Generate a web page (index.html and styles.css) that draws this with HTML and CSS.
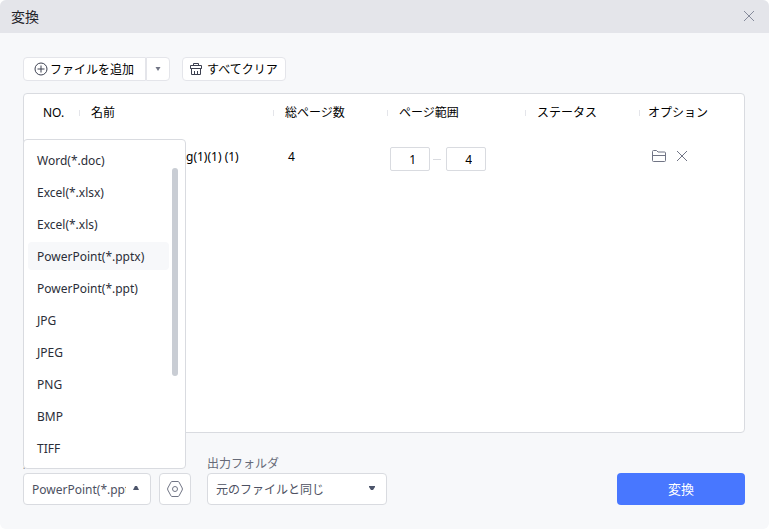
FILE: index.html
```html
<!DOCTYPE html>
<html lang="ja">
<head>
<meta charset="utf-8">
<meta name="viewport" content="width=device-width, initial-scale=1">
<title>変換</title>
<link rel="stylesheet" href="styles.css">
</head>
<body>
<div class="window">
  <header class="titlebar">
    <h1 class="title">変換</h1>
    <button class="icon-button close" type="button" aria-label="閉じる">
      <svg width="12" height="12" viewBox="0 0 12 12"><path d="M1 1l10 10M11 1L1 11"/></svg>
    </button>
  </header>
  <main class="content">
    <div class="toolbar">
      <div class="split">
        <button class="tool add" type="button">
          <svg width="14" height="14" viewBox="0 0 14 14"><circle cx="7" cy="7" r="6"/><path d="M7 3.5v7M3.5 7h7"/></svg>
          <span>ファイルを追加</span>
        </button>
        <button class="tool more" type="button" aria-label="その他の追加方法">
          <svg class="caret" width="6" height="4" viewBox="0 0 6 4"><path d="M.5 0h5L3 4z"/></svg>
        </button>
      </div>
      <button class="tool clear" type="button">
        <svg width="14" height="14" viewBox="0 0 14 14"><path d="M4.5 3.500V1.500h5v2M2.500 6.500h-1v-3h11v3h-1M1.500 6.500h11M2.500 6.500v6h9v-6M5.500 9v3.500M8.500 9v3.500"/></svg>
        <span>すべてクリア</span>
      </button>
    </div>
    <section class="panel">
      <table class="files">
        <thead>
          <tr>
            <th class="col-no" scope="col">NO.</th>
            <th scope="col">名前</th>
            <th class="col-total" scope="col">総ページ数</th>
            <th class="col-range" scope="col">ページ範囲</th>
            <th class="col-status" scope="col">ステータス</th>
            <th class="col-option" scope="col">オプション</th>
          </tr>
        </thead>
        <tbody>
          <tr>
            <td></td>
            <td class="file-name">g(1)(1) (1)</td>
            <td class="total">4</td>
            <td class="range-cell">
              <div class="range">
                <input type="text" value="1" aria-label="開始ページ">
                <span class="dash"></span>
                <input type="text" value="4" aria-label="終了ページ">
              </div>
            </td>
            <td></td>
            <td class="option-cell">
              <div class="actions">
                <button class="icon-button" type="button" aria-label="フォルダを開く">
                  <svg width="14" height="14" viewBox="0 0 14 14"><path d="M.5 11.500v-9q0-1 1-1h3l1.500 1.500h6.500q1 0 1 1v7.500q0 1-1 1h-11q-1 0-1-1zM.5 6.500h13"/></svg>
                </button>
                <button class="icon-button" type="button" aria-label="削除">
                  <svg width="12" height="12" viewBox="0 0 12 12"><path d="M1 1l10 10M11 1L1 11"/></svg>
                </button>
              </div>
            </td>
          </tr>
        </tbody>
      </table>
    </section>
    <footer class="footer">
      <div class="field format">
        <label for="format">形式</label>
        <div class="select">
          <select id="format"><option>PowerPoint(*.pptx)</option></select>
          <svg class="caret" width="6" height="4" viewBox="0 0 6 4"><path d="M0 4h6L4 0H2z"/></svg>
          <div class="menu">
            <ul class="options" role="listbox" aria-label="形式">
              <li role="option">Word(*.doc)</li>
              <li role="option">Excel(*.xlsx)</li>
              <li role="option">Excel(*.xls)</li>
              <li role="option" aria-selected="true">PowerPoint(*.pptx)</li>
              <li role="option">PowerPoint(*.ppt)</li>
              <li role="option">JPG</li>
              <li role="option">JPEG</li>
              <li role="option">PNG</li>
              <li role="option">BMP</li>
              <li role="option">TIFF</li>
            </ul>
            <div class="thumb"></div>
          </div>
        </div>
      </div>
      <button class="settings" type="button" aria-label="設定">
        <svg width="16" height="16" viewBox="0 0 16 16"><path d="M5 .5h6q.6 0 1 .6L15.200 7q.4 1 0 2L12 14.900q-.4.600-1 .6H5q-.6 0-1-.6L.8 9q-.4-1 0-2L4 1.100q.4-.6 1-.6z"/><circle cx="8" cy="8" r="2.500"/></svg>
      </button>
      <div class="field folder">
        <label for="folder">出力フォルダ</label>
        <div class="select">
          <select id="folder"><option>元のファイルと同じ</option></select>
          <svg class="caret" width="6" height="4" viewBox="0 0 6 4"><path d="M0 0h6v1L4 4H2L0 1z"/></svg>
        </div>
      </div>
      <button class="convert" type="button">変換</button>
    </footer>
  </main>
</div>
</body>
</html>
```
FILE: styles.css
```css
* {
  box-sizing: border-box;
}

body {
  margin: 0;
  background: #fff;
  color: #000;
  font: 12px/16px "Noto Sans", "Noto Sans CJK JP", sans-serif;
}

button,
input,
select {
  margin: 0;
  font: inherit;
  color: inherit;
}

button {
  display: flex;
  align-items: center;
  justify-content: center;
  padding: 0;
  border: 0;
  background: none;
}

svg {
  display: block;
  flex: none;
  fill: none;
  stroke: currentColor;
}

.caret {
  fill: #4d556b;
  stroke: none;
}

.window {
  display: flex;
  flex-direction: column;
  min-height: 100vh;
  background: #f7f8fa;
  border-radius: 6px;
  overflow: hidden;
}

.titlebar {
  display: flex;
  align-items: center;
  justify-content: space-between;
  height: 33px;
  padding: 0 14px 0 11px;
  background: #e4e5ea;
}

.title {
  margin: 0;
  font-size: 14px;
  font-weight: 400;
  color: #1f2329;
}

.icon-button {
  color: #717585;
}

.close {
  padding-bottom: 2px;
  color: #868b9b;
}

.content {
  flex: 1;
  display: flex;
  flex-direction: column;
  padding: 24px 24px 24px 23px;
}

.toolbar {
  display: flex;
  gap: 12px;
}

.split {
  display: flex;
}

.tool {
  gap: 2px;
  height: 24px;
  border: 1px solid #e4e5ea;
  border-radius: 4px;
  background: #fff;
}

.tool span {
  padding-top: 2px;
}

.tool svg {
  color: #3c4050;
}

.add {
  padding: 0 11px 0 10px;
  border-radius: 4px 0 0 4px;
}

.more {
  width: 24px;
  border-radius: 0 4px 4px 0;
}

.more .caret {
  fill: #717585;
}

.clear {
  gap: 4px;
  padding: 0 7px 0 6px;
}

.panel {
  flex: 1;
  margin-top: 12px;
  border: 1px solid #d9dbe0;
  border-radius: 4px;
  background: #fff;
}

.files {
  width: 100%;
  table-layout: fixed;
  border-collapse: collapse;
}

.files th {
  position: relative;
  height: 38px;
  padding: 0 0 0 11px;
  font-weight: 400;
  text-align: left;
}

.files th:not(:last-child)::after {
  content: "";
  position: absolute;
  right: 0;
  top: 16px;
  width: 1px;
  height: 6px;
  background: #e4e5ea;
}

.files td {
  height: 50px;
  padding: 0;
}

.files .col-no {
  width: 56px;
  padding-left: 19px;
}

.col-total,
.col-status {
  width: 114px;
}

.col-range {
  width: 138px;
}

.files .col-option {
  width: 104px;
  padding-left: 8px;
}

.files .file-name {
  padding-left: 106px;
}

.files .total {
  padding-left: 14px;
}

.files .range-cell {
  padding: 4px 0 0 2px;
}

.range {
  display: flex;
  align-items: center;
}

.range input {
  width: 40px;
  height: 24px;
  padding: 0 13px 0 4px;
  border: 1px solid #d9dbe0;
  border-radius: 2px;
  background: #fff;
  text-align: right;
}

.dash {
  width: 8px;
  height: 1px;
  margin: 0 5px 0 3px;
  background: #d9dbe0;
}

.files .option-cell {
  padding: 0 0 2px 12px;
}

.actions {
  display: flex;
  align-items: center;
  gap: 10px;
}

.footer {
  display: flex;
  align-items: flex-end;
  margin-top: 23px;
}

.field {
  display: flex;
  flex-direction: column;
  gap: 1px;
  color: #666a78;
}

.format {
  width: 128px;
}

.folder {
  width: 180px;
}

.select {
  position: relative;
  color: #4d5162;
}

.select select {
  display: block;
  width: 100%;
  height: 32px;
  padding: 2px 24px 0 8px;
  border: 1px solid #d9dbe0;
  border-radius: 4px;
  background: #fff;
  appearance: none;
}

.select > .caret {
  position: absolute;
  top: 13px;
  right: 12px;
}

.menu {
  position: absolute;
  left: 0;
  bottom: calc(100% + 4px);
  width: 163px;
  padding: 6px 16px 6px 4px;
  border: 1px solid #d9dbe0;
  border-radius: 4px;
  background: #fff;
  color: #2b2e38;
}

.options {
  display: flex;
  flex-direction: column;
  gap: 4px;
  margin: 0;
  padding: 0;
  list-style: none;
}

.options li {
  padding: 7px 9px 5px;
  border-radius: 4px;
}

.options [aria-selected="true"] {
  background: #f7f8fa;
}

.thumb {
  position: absolute;
  top: 28px;
  right: 7px;
  width: 6px;
  height: 208px;
  border-radius: 3px;
  background: #c9cdd4;
}

.settings {
  width: 32px;
  height: 32px;
  margin: 0 16px 0 8px;
  border: 1px solid #d9dbe0;
  border-radius: 4px;
  background: #fff;
  color: #717585;
}

.convert {
  width: 128px;
  height: 32px;
  margin-left: auto;
  border-radius: 4px;
  background: #4877ff;
  color: #fff;
  font-size: 13px;
}
```
